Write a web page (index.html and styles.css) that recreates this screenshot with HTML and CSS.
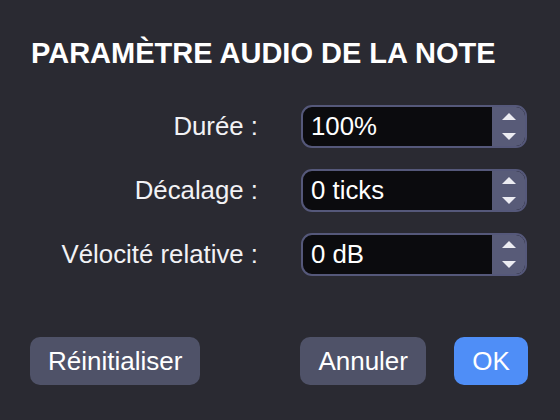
FILE: index.html
```html
<!DOCTYPE html>
<html lang="fr">
<head>
<meta charset="utf-8">
<title>Paramètre audio de la note</title>
<link rel="stylesheet" href="styles.css">
</head>
<body>
<div class="dialog">
  <h1 class="title">PARAMÈTRE AUDIO DE LA NOTE</h1>
  <div class="form">
    <label class="label">Durée :</label>
    <div class="spin">
      <div class="value">100%</div>
      <div class="arrows">
        <svg width="14" height="7" viewBox="0 0 14 7"><path d="M0 7 L7 0 L14 7 Z" fill="#ececf2"/></svg>
        <svg width="14" height="7" viewBox="0 0 14 7"><path d="M0 0 L14 0 L7 7 Z" fill="#ececf2"/></svg>
      </div>
    </div>
    <label class="label">Décalage :</label>
    <div class="spin">
      <div class="value">0 ticks</div>
      <div class="arrows">
        <svg width="14" height="7" viewBox="0 0 14 7"><path d="M0 7 L7 0 L14 7 Z" fill="#ececf2"/></svg>
        <svg width="14" height="7" viewBox="0 0 14 7"><path d="M0 0 L14 0 L7 7 Z" fill="#ececf2"/></svg>
      </div>
    </div>
    <label class="label">Vélocité relative :</label>
    <div class="spin">
      <div class="value">0 dB</div>
      <div class="arrows">
        <svg width="14" height="7" viewBox="0 0 14 7"><path d="M0 7 L7 0 L14 7 Z" fill="#ececf2"/></svg>
        <svg width="14" height="7" viewBox="0 0 14 7"><path d="M0 0 L14 0 L7 7 Z" fill="#ececf2"/></svg>
      </div>
    </div>
  </div>
  <div class="footer">
    <button class="btn">Réinitialiser</button>
    <div class="right">
      <button class="btn">Annuler</button>
      <button class="btn primary">OK</button>
    </div>
  </div>
</div>
</body>
</html>
```

FILE: styles.css
```css
html, body {
  margin: 0;
  padding: 0;
  background: #2a2a32;
  width: 560px;
  height: 420px;
  overflow: hidden;
}
.dialog {
  font-family: "Liberation Sans", Arial, sans-serif;
  color: #f4f4f6;
  padding: 39px 32px 0 30px;
}
.title {
  margin: 0 0 0 1px;
  font-size: 29px;
  line-height: 29px;
  font-weight: bold;
  color: #ffffff;
}
.form {
  margin-top: 37px;
  display: grid;
  grid-template-columns: 228px 226px;
  column-gap: 43px;
  row-gap: 21px;
  align-items: center;
}
.label {
  text-align: right;
  font-size: 25.8px;
  color: #f2f2f5;
}
.spin {
  display: flex;
  height: 43px;
  box-sizing: border-box;
  border: 2px solid #55587a;
  border-radius: 11px;
  background: #0b0b0e;
  overflow: hidden;
}
.value {
  flex: 1;
  font-size: 25.8px;
  line-height: 39px;
  padding-left: 8px;
  color: #ffffff;
}
.arrows {
  width: 33px;
  background: #585b78;
  display: flex;
  flex-direction: column;
  align-items: center;
  justify-content: center;
  gap: 13px;
}
.arrows svg { display: block; }
.footer {
  margin-top: 61px;
  display: flex;
  justify-content: space-between;
}
.right {
  display: flex;
  gap: 28px;
}
.btn {
  height: 48px;
  border: none;
  border-radius: 10px;
  background: #4f5268;
  color: #ffffff;
  font-family: "Liberation Sans", Arial, sans-serif;
  font-size: 26px;
  padding: 0 18px;
}
.btn.primary {
  background: #4f8ef7;
  width: 74px;
  padding: 0;
}
```
